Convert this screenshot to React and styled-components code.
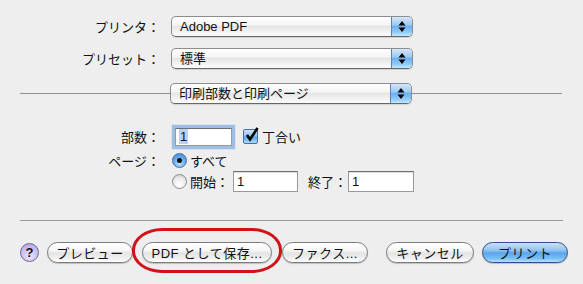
import React from "react";
import styled, { createGlobalStyle } from "styled-components";

const GlobalStyle = createGlobalStyle`
  html, body {
    margin: 0;
    padding: 0;
    background: #eeeeee;
  }
  body {
    font-family: "Liberation Sans", "Noto Sans CJK JP", sans-serif;
    font-size: 13px;
    color: #111;
  }
`;

const Page = styled.div`
  width: 583px;
  height: 284px;
  box-sizing: border-box;
  padding-top: 16px;
  overflow: hidden;
`;

const FormRow = styled.div`
  display: flex;
  align-items: center;
  height: ${(p) => p.h || 21}px;
  margin-top: ${(p) => p.mt || 0}px;
`;

const Label = styled.div`
  width: 160px;
  margin-right: 11px;
  text-align: right;
  white-space: nowrap;
  font-size: 13px;
`;

const Popup = styled.div`
  display: flex;
  width: 242px;
  height: 21px;
  box-sizing: border-box;
  border: 1px solid #8d8d8d;
  border-bottom-color: #666;
  border-radius: 5px;
  overflow: hidden;
  background: linear-gradient(
    to bottom,
    #ffffff 0%,
    #f5f5f5 40%,
    #e6e6e6 50%,
    #f1f1f1 75%,
    #fbfbfb 100%
  );
  box-shadow: 0 1px 1px rgba(0, 0, 0, 0.12);
`;

const PopupText = styled.span`
  flex: 1;
  padding-left: 8px;
  line-height: 19px;
  font-size: 13px;
  white-space: nowrap;
`;

const PopupArrows = styled.span`
  width: 20px;
  display: flex;
  align-items: center;
  justify-content: center;
  border-left: 1px solid #5a84c0;
  background: linear-gradient(
    to bottom,
    #d3e6fa 0%,
    #9fcbf4 40%,
    #6fb1ee 50%,
    #8fcbf9 80%,
    #c4e8ff 100%
  );
`;

const DividerRow = styled.div`
  display: flex;
  align-items: center;
  height: 21px;
  margin-top: ${(p) => p.mt || 0}px;
  padding: 0 21px 0 20px;
`;

const Line = styled.div`
  flex: ${(p) => (p.fixed ? "0 0 " + p.fixed + "px" : 1)};
  height: 1px;
  background: #8f8f8f;
`;

const Rule = styled.div`
  height: 1px;
  margin: ${(p) => p.mt || 0}px 20px 0 20px;
  background: #9a9a9a;
`;

const Field = styled.div`
  width: ${(p) => p.w}px;
  height: ${(p) => p.h || 20}px;
  box-sizing: border-box;
  margin-left: ${(p) => p.ml || 0}px;
  border: 1px solid #9a9a9a;
  border-top-color: #6f6f6f;
  background: #fff;
  padding-left: 3px;
  line-height: ${(p) => (p.h || 20) - 2}px;
  font-size: 13px;
  box-shadow: ${(p) =>
    p.focused ? "0 0 0 3px #9dbfe6, 0 0 1px 3px #7fa7d6" : "inset 0 1px 1px rgba(0,0,0,0.15)"};
`;

const Selected = styled.span`
  background: #b6d3f7;
  padding: 0 1px;
`;

const CheckBox = styled.span`
  position: relative;
  display: inline-block;
  width: 13px;
  height: 13px;
  margin-left: 11px;
  border: 1px solid #4d6f9f;
  border-radius: 2px;
  background: linear-gradient(to bottom, #cfe5fb 0%, #8ec3f1 45%, #5ea5ea 55%, #a9dcfd 100%);

  svg {
    position: absolute;
    left: 1px;
    top: -3px;
  }
`;

const Text = styled.span`
  margin-left: ${(p) => p.ml || 0}px;
  font-size: 13px;
  white-space: nowrap;
`;

const Radio = styled.span`
  display: inline-flex;
  align-items: center;
  justify-content: center;
  width: 15px;
  height: 15px;
  box-sizing: border-box;
  margin-left: 1px;
  border-radius: 50%;
  border: 1px solid ${(p) => (p.on ? "#4b6c9c" : "#8a8a8a")};
  background: ${(p) =>
    p.on
      ? "radial-gradient(circle at 50% 75%, #b6e2ff 0%, #6db0ee 45%, #3f86d8 100%)"
      : "radial-gradient(circle at 50% 75%, #ffffff 0%, #eeeeee 50%, #c9c9c9 100%)"};

  &::after {
    content: "";
    display: ${(p) => (p.on ? "block" : "none")};
    width: 5px;
    height: 5px;
    border-radius: 50%;
    background: #111;
  }
`;

const ButtonRow = styled.div`
  display: flex;
  align-items: center;
  height: 20px;
  margin-top: 21px;
  padding-left: 20px;
`;

const HelpButton = styled.span`
  display: inline-flex;
  align-items: center;
  justify-content: center;
  width: 19px;
  height: 19px;
  box-sizing: border-box;
  border-radius: 50%;
  border: 1px solid #6d6d8a;
  background: radial-gradient(circle at 50% 70%, #efe8ff 0%, #cbbdf3 55%, #a897e0 100%);
  font-weight: bold;
  font-size: 13px;
  color: #111;
`;

const Button = styled.span`
  position: relative;
  display: inline-flex;
  align-items: center;
  justify-content: center;
  width: ${(p) => p.w}px;
  height: 21px;
  box-sizing: border-box;
  margin-left: ${(p) => p.ml || 0}px;
  border-radius: 11px;
  border: 1px solid ${(p) => (p.primary ? "#2f4f8f" : "#7b7b7b")};
  background: ${(p) =>
    p.primary
      ? "linear-gradient(to bottom, #c9e1f9 0%, #8fc1f1 40%, #5ba4ea 52%, #78bdf6 80%, #b4e2ff 100%)"
      : "linear-gradient(to bottom, #ffffff 0%, #f6f6f6 40%, #e4e4e4 52%, #efefef 80%, #ffffff 100%)"};
  box-shadow: 0 1px 1px rgba(0, 0, 0, 0.2);
  font-size: 13px;
  white-space: nowrap;
  letter-spacing: 0.5px;
`;

const Circled = styled.span`
  position: absolute;
  left: -11px;
  top: -15px;
  width: 150px;
  height: 45px;
  box-sizing: border-box;
  border: 3px solid #d31218;
  border-radius: 30px / 22px;
  pointer-events: none;
`;

const Arrows = () => (
  <svg width="8" height="13" viewBox="0 0 8 13">
    <path d="M4 1 L7.5 5.5 L0.5 5.5 Z" fill="#000" />
    <path d="M4 12 L7.5 7.5 L0.5 7.5 Z" fill="#000" />
  </svg>
);

const PopupMenu = ({ children }) => (
  <Popup>
    <PopupText>{children}</PopupText>
    <PopupArrows>
      <Arrows />
    </PopupArrows>
  </Popup>
);

const Check = () => (
  <svg width="14" height="15" viewBox="0 0 14 15">
    <path d="M2 8 L5 12.5 L12.5 1" stroke="#000" strokeWidth="2.6" fill="none" strokeLinejoin="miter" />
  </svg>
);

export default function App() {
  return (
    <>
      <GlobalStyle />
      <Page>
        <FormRow>
          <Label>プリンタ：</Label>
          <PopupMenu>Adobe PDF</PopupMenu>
        </FormRow>
        <FormRow mt={11}>
          <Label>プリセット：</Label>
          <PopupMenu>標準</PopupMenu>
        </FormRow>
        <DividerRow mt={14}>
          <Line fixed={150} />
          <PopupMenu>印刷部数と印刷ページ</PopupMenu>
          <Line />
        </DividerRow>

        <FormRow mt={21} h={23}>
          <Label>部数：</Label>
          <Field w={57} h={18} ml={4} focused>
            <Selected>1</Selected>
          </Field>
          <CheckBox>
            <Check />
          </CheckBox>
          <Text ml={4}>丁合い</Text>
        </FormRow>
        <FormRow mt={4} h={16}>
          <Label>ページ：</Label>
          <Radio on />
          <Text ml={3}>すべて</Text>
        </FormRow>
        <FormRow mt={3} h={21}>
          <Label />
          <Radio />
          <Text ml={3}>開始：</Text>
          <Field w={65} h={21} ml={4}>
            1
          </Field>
          <Text ml={10}>終了：</Text>
          <Field w={66} h={21} ml={1}>
            1
          </Field>
        </FormRow>

        <Rule mt={28} />

        <ButtonRow>
          <HelpButton>?</HelpButton>
          <Button w={86} ml={8}>
            プレビュー
          </Button>
          <Button w={130} ml={9}>
            PDF として保存...
            <Circled />
          </Button>
          <Button w={86} ml={10}>
            ファクス...
          </Button>
          <Button w={88} ml={18}>
            キャンセル
          </Button>
          <Button w={86} ml={8} primary>
            プリント
          </Button>
        </ButtonRow>
      </Page>
    </>
  );
}
